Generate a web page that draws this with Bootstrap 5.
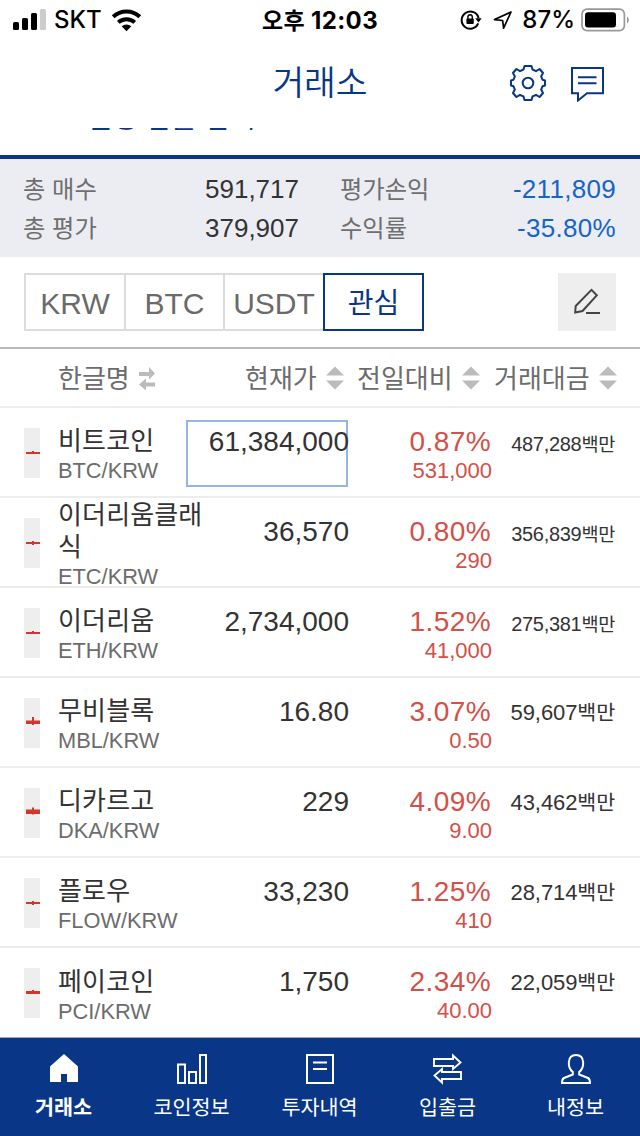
<!DOCTYPE html>
<html lang="ko">
<head>
<meta charset="utf-8">
<meta name="viewport" content="width=device-width, initial-scale=1">
<title>거래소</title>
<link href="https://cdn.jsdelivr.net/npm/bootstrap@5.3.0/dist/css/bootstrap.min.css" rel="stylesheet">
<style>
:root{--navy:#093687}
body{font-family:"Liberation Sans","Noto Sans CJK KR",sans-serif;color:#333;background:#fff;height:1136px;overflow:hidden;-webkit-font-smoothing:antialiased}
svg{display:block;flex:none}
.status{height:40px;font-family:Inter,"Noto Sans CJK KR",sans-serif;font-size:24px;line-height:42px;color:#000;font-weight:500}
.status .clock{font-weight:700;left:0;right:0;top:0;letter-spacing:.35px}
.status .clock b{font-size:23px;font-weight:700}
.titlebar{height:88px;color:var(--navy)}
.titlebar h1{font-size:34.5px;line-height:40px;font-weight:350;padding-top:23px}
.tools{right:36px;top:24px;gap:24px}
.peek{height:2px;color:var(--navy)}
.peek div{font-size:28px;line-height:30px;height:30px;padding-left:61px;margin-top:-24px;letter-spacing:-.2px}
.rule{height:4px;background:var(--navy);margin-top:25px}
.summary{height:98px;background:#ecedf3;padding:11px 24px 0 23px;font-size:26px;line-height:39px}
.summary .k{color:#6f6f6f;font-size:24.3px}
.summary .half-a{width:276px}
.summary .half-b{width:276px}
.neg{color:#1664c8;letter-spacing:.3px}
.filters{height:92px;padding:16px 24px 0;border-bottom:2px solid #b9b9b9}
.tab{width:102px;height:58px;border:2px solid #dcdcdc;margin-right:-2px;font-size:30px;line-height:57px;color:#6a6a6a;text-align:center;white-space:nowrap}
.tab.slim{width:101px}
.tab.on{border-color:var(--navy);color:var(--navy);font-size:28px;position:relative;width:101px;font-weight:400}
.edit{width:58px;height:58px;background:#eee}
.heads{height:59px;border-bottom:2px solid #ededed;font-size:26px;line-height:60px;color:#6c6c6c}
.coin{height:90px;border-bottom:2px solid #ededed;padding-left:24px}
.coin .candle{margin-top:20px}
.coin .who{width:152px;margin-left:18px;padding-top:5px}
.coin .nm{font-size:26px;line-height:32px;letter-spacing:.15px}
.coin .code{font-size:21.8px;line-height:26px;padding-top:1px;color:#6c6c6c}
.coin .price{width:162px;height:67px;margin:12px 0 0 -24px;font-size:28px;line-height:32px;padding-top:4px;border:2px solid transparent;text-align:right}
.coin .price span{margin-right:-3px}
.coin .price.hot{border-color:#95b6e4}
.coin .chg{width:144px;padding-top:18px;color:#d34f47;text-align:right}
.coin .pct{font-size:28px;line-height:32px;letter-spacing:.4px;padding-right:1px}
.coin .amt{font-size:22px;line-height:26px}
.coin .vol{width:123px;padding-top:20px;font-size:20px;line-height:32px;text-align:right;letter-spacing:-.3px}
.coin .vol small{font-size:18.6px}
.coin .vol.wide{font-size:22px;padding-top:19px;letter-spacing:-.1px}
.coin .vol.wide small{font-size:20.6px}
.tabbar{height:99px;background:var(--navy);border-top:1px solid #a5a5a5;color:#fff;font-size:20.7px}
.tabbar a{width:128px;padding:15px 1px 0 0;color:#fff;text-decoration:none;line-height:30px}
.tabbar a svg{margin:0 auto 8px}
</style>
</head>
<body>
<div class="status position-relative d-flex align-items-center">
  <svg width="36" height="24" style="margin-left:12px" viewBox="0 0 36 24"><g><rect x="1" y="14" width="6" height="8" rx="1.5"/><rect x="10" y="10" width="6" height="12" rx="1.5"/><rect x="19" y="5" width="6" height="17" rx="1.5"/><rect x="28" y="1" width="6" height="21" rx="1.5" fill="#ccc"/></g></svg>
  <span style="margin-left:6px">SKT</span>
  <svg width="32" height="24" style="margin-left:9px" viewBox="0 0 32 24"><g fill="none" stroke="#000" stroke-width="4"><path d="M2.2 8.8a19.5 19.5 0 0 1 26.600 0"/><path d="M7.300 14.400a12 12 0 0 1 16.400 0"/></g><path d="M15.500 23.200l-4.800-4.900a7 7 0 0 1 9.600 0z"/></svg>
  <div class="clock position-absolute text-center"><b>오후</b> 12:03</div>
  <div class="d-flex align-items-center position-absolute end-0 top-0 h-100" style="padding-right:9px">
    <svg width="22" height="22" viewBox="0 0 22 22"><path d="M18.200 14.400A8.600 8.600 0 1 1 18.600 9" fill="none" stroke="#000" stroke-width="2"/><path d="M15.200 9.200h6.500l-3.200 4.200z"/><rect x="6.400" y="9.400" width="7.400" height="5.600" rx="1"/><path d="M7.900 10V8a2.200 2.200 0 0 1 4.400 0v2" fill="none" stroke="#000" stroke-width="1.400"/></svg>
    <svg width="20" height="20" viewBox="0 0 20 20" style="margin-left:11px"><path d="M1.500 9.600L18 2 10.600 18.200 9.600 10.500z" fill="none" stroke="#000" stroke-width="1.700" stroke-linejoin="round"/></svg>
    <span style="margin-left:9px">87%</span>
    <svg width="50" height="24" viewBox="0 0 50 24" style="margin-left:6px"><rect x="1" y="1.200" width="42.400" height="21.400" rx="5" fill="none" stroke="#999" stroke-width="1.700"/><rect x="4" y="4.200" width="31" height="15.400" rx="3"/><path d="M46 8.500c2.400 1.300 2.400 5.700 0 7z" fill="#999"/></svg>
  </div>
</div>

<header class="titlebar position-relative text-center">
  <h1 class="m-0">거래소</h1>
  <div class="tools position-absolute d-flex">
    <svg width="36" height="38" viewBox="0 0 36 38" fill="none" stroke="#093687" stroke-width="2"><path d="M14.500 2h7l1 3.500 3.500 1.700 3.600-2.200 3.400 4-1.900 3.400 1.400 3.300 2.500.8v5l-2.500.8-1.400 3.300 1.900 3.400-3.400 4-3.600-2.200-3.500 1.700-1 3.500h-7l-1-3.500-3.500-1.700L6.400 33 3 29l1.900-3.400-1.400-3.300-2.500-.8v-5l2.500-.8 1.400-3.300L3 9l3.400-4L10 7.200l3.500-1.700z" stroke-linejoin="round"/><circle cx="18" cy="19" r="5.300"/></svg>
    <svg width="34" height="38" viewBox="0 0 34 38" fill="none" stroke="#093687" stroke-width="2"><path d="M2 4h31v25.300H17L8 36.500V29.300H2z"/><path d="M8 13.300h18.500M8 19.300h18.500"/></svg>
  </div>
</header>
<div class="peek overflow-hidden"><div>코인명/심볼 검색</div></div>
<div class="rule"></div>

<section class="summary d-flex">
  <div class="half-a">
    <div class="d-flex justify-content-between"><span class="k">총 매수</span><span>591,717</span></div>
    <div class="d-flex justify-content-between"><span class="k">총 평가</span><span>379,907</span></div>
  </div>
  <div class="half-b ms-auto">
    <div class="d-flex justify-content-between"><span class="k">평가손익</span><span class="neg">-211,809</span></div>
    <div class="d-flex justify-content-between"><span class="k">수익률</span><span class="neg">-35.80%</span></div>
  </div>
</section>

<div class="filters d-flex">
  <div class="tab">KRW</div><div class="tab slim">BTC</div><div class="tab">USDT</div><div class="tab on">관심</div>
  <div class="edit ms-auto d-flex align-items-center justify-content-center">
    <svg width="28" height="28" viewBox="0 0 28 28" fill="none" stroke="#444" stroke-width="2"><path d="M2.200 25l.5-6.500L18.500 2.400l5.300 5.400L9.500 23.500z" transform="translate(0 -.5)"/><path d="M13 25h14"/></svg>
  </div>
</div>

<div class="heads d-flex align-items-start">
  <span style="margin-left:58px;width:72px">한글명</span>
  <svg width="18" height="24" viewBox="0 0 18 24" fill="#bbb" style="margin:18px 0 0 9px"><path d="M0 5h10V0l6 6.500-6 6V9H0zM16 15.500H7V11.500L0 17.500l7 6V19.500h9z"/></svg>
  <span style="margin-left:88px;width:72px">현재가</span>
  <svg width="18" height="24" viewBox="0 0 18 24" fill="#bbb" style="margin:17px 0 0 9px"><path d="M0 9.500L9 .5l9 9zM0 14.500h18l-9 9z"/></svg>
  <span style="margin-left:13px;width:96px">전일대비</span>
  <svg width="18" height="24" viewBox="0 0 18 24" fill="#bbb" style="margin:17px 0 0 9px"><path d="M0 9.500L9 .5l9 9zM0 14.500h18l-9 9z"/></svg>
  <span style="margin-left:14px;width:96px">거래대금</span>
  <svg width="18" height="24" viewBox="0 0 18 24" fill="#bbb" style="margin:17px 0 0 9px"><path d="M0 9.500L9 .5l9 9zM0 14.500h18l-9 9z"/></svg>
</div>

<main>
  <div class="coin d-flex">
    <svg class="candle" width="16" height="50"><rect width="16" height="50" fill="#eee"/><path d="M2 24h14v2H2zM8 23h2v3H8z" fill="#cf372f"/></svg>
    <div class="who d-flex flex-column justify-content-center"><div class="nm">비트코인</div><div class="code">BTC/KRW</div></div>
    <div class="price hot"><span>61,384,000</span></div>
    <div class="chg"><div class="pct">0.87%</div><div class="amt">531,000</div></div>
    <div class="vol">487,288<small>백만</small></div>
  </div>
  <div class="coin d-flex">
    <svg class="candle" width="16" height="50"><rect width="16" height="50" fill="#eee"/><path d="M2 24h14v2H2zM8 23h2v4H8z" fill="#cf372f"/></svg>
    <div class="who d-flex flex-column justify-content-center"><div class="nm">이더리움클래<br>식</div><div class="code">ETC/KRW</div></div>
    <div class="price"><span>36,570</span></div>
    <div class="chg"><div class="pct">0.80%</div><div class="amt">290</div></div>
    <div class="vol">356,839<small>백만</small></div>
  </div>
  <div class="coin d-flex">
    <svg class="candle" width="16" height="50"><rect width="16" height="50" fill="#eee"/><path d="M2 24h14v2H2zM8 23h2v3H8z" fill="#cf372f"/></svg>
    <div class="who d-flex flex-column justify-content-center"><div class="nm">이더리움</div><div class="code">ETH/KRW</div></div>
    <div class="price"><span>2,734,000</span></div>
    <div class="chg"><div class="pct">1.52%</div><div class="amt">41,000</div></div>
    <div class="vol">275,381<small>백만</small></div>
  </div>
  <div class="coin d-flex">
    <svg class="candle" width="16" height="50"><rect width="16" height="50" fill="#eee"/><path d="M2 22.500h14V26H2zM8 19h2v8H8z" fill="#cf372f"/></svg>
    <div class="who d-flex flex-column justify-content-center"><div class="nm">무비블록</div><div class="code">MBL/KRW</div></div>
    <div class="price"><span>16.80</span></div>
    <div class="chg"><div class="pct">3.07%</div><div class="amt">0.50</div></div>
    <div class="vol wide">59,607<small>백만</small></div>
  </div>
  <div class="coin d-flex">
    <svg class="candle" width="16" height="50"><rect width="16" height="50" fill="#eee"/><path d="M2 21.500h14V26H2zM8 19.500h2v7H8z" fill="#cf372f"/></svg>
    <div class="who d-flex flex-column justify-content-center"><div class="nm">디카르고</div><div class="code">DKA/KRW</div></div>
    <div class="price"><span>229</span></div>
    <div class="chg"><div class="pct">4.09%</div><div class="amt">9.00</div></div>
    <div class="vol wide">43,462<small>백만</small></div>
  </div>
  <div class="coin d-flex">
    <svg class="candle" width="16" height="50"><rect width="16" height="50" fill="#eee"/><path d="M2 24h14v2H2zM8 23h2v4H8z" fill="#cf372f"/></svg>
    <div class="who d-flex flex-column justify-content-center"><div class="nm">플로우</div><div class="code">FLOW/KRW</div></div>
    <div class="price"><span>33,230</span></div>
    <div class="chg"><div class="pct">1.25%</div><div class="amt">410</div></div>
    <div class="vol wide">28,714<small>백만</small></div>
  </div>
  <div class="coin d-flex border-bottom-0" style="height:89px">
    <svg class="candle" width="16" height="50"><rect width="16" height="50" fill="#eee"/><path d="M2 23h14v3H2zM8 22h2v3H8z" fill="#cf372f"/></svg>
    <div class="who d-flex flex-column justify-content-center"><div class="nm">페이코인</div><div class="code">PCI/KRW</div></div>
    <div class="price"><span>1,750</span></div>
    <div class="chg"><div class="pct">2.34%</div><div class="amt">40.00</div></div>
    <div class="vol wide">22,059<small>백만</small></div>
  </div>
</main>

<nav class="tabbar d-flex text-center">
  <a href="#" class="fw-bold"><svg width="30" height="32" viewBox="0 0 30 32" fill="#fff"><path d="M15 1l14 12.500V29H18v-8h-6v8H1V13.500z"/></svg>거래소</a>
  <a href="#"><svg width="30" height="32" viewBox="0 0 30 32" fill="none" stroke="#fff" stroke-width="2"><path d="M1 11.500h7V30H1zM12 19h7v11h-7zM23 2h6v28h-6z"/></svg>코인정보</a>
  <a href="#"><svg width="30" height="32" viewBox="0 0 30 32" fill="none" stroke="#fff" stroke-width="2"><path d="M2 2h26v28H2zM8 9.500h14M8 16h14"/></svg>투자내역</a>
  <a href="#"><svg width="30" height="32" viewBox="0 0 30 32" fill="none" stroke="#fff" stroke-width="1.900"><path d="M1 6h19V2.500l7.500 7-7.500 6.500V13H1zM28 19H9v-3L1.500 22.500 9 29.500V26h19z"/></svg>입출금</a>
  <a href="#"><svg width="32" height="32" viewBox="0 0 32 32" fill="none" stroke="#fff" stroke-width="2"><path d="M16 2c-9.500 0-8.500 13-3.200 17v2.500L4 25c-2 1-2 3-2 5h28c0-2 0-4-2-5l-8.800-3.500V19C24.500 15 25.500 2 16 2z"/></svg>내정보</a>
</nav>
<script src="https://cdn.jsdelivr.net/npm/bootstrap@5.3.0/dist/js/bootstrap.bundle.min.js"></script>
</body>
</html>
